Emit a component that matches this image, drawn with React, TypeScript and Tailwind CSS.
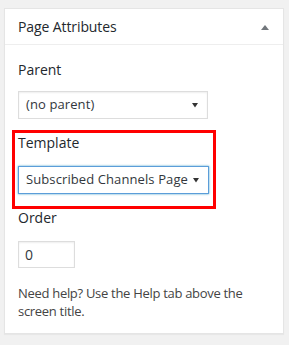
const font = { fontFamily: '"Open Sans", "Noto Sans", Arial, sans-serif' };

function SelectBox({ value, focused = false }: { value: string; focused?: boolean }) {
  return (
    <div
      className={
        'flex items-center justify-between h-[28px] pl-[7px] pr-[8px] bg-white text-[13px] tracking-[0.1px] text-[#32373c] ' +
        (focused
          ? 'w-[191px] border border-[#5b9dd9] shadow-[0_0_2px_rgba(30,140,190,0.8)]'
          : 'w-[190px] border border-[#ddd] shadow-[inset_0_1px_2px_rgba(0,0,0,0.07)]')
      }
    >
      <span className="whitespace-nowrap">{value}</span>
      <svg width="8" height="6" viewBox="0 0 8 6" className="shrink-0">
        <path d="M1 1h6L4 5.5z" fill="#333" />
      </svg>
    </div>
  );
}

export default function App() {
  return (
    <div className="w-[289px] h-[345px] bg-[#f1f1f1] pt-[8px] pl-[4px]" style={font}>
      {/* Card */}
      <div className="w-[280px] h-[326px] bg-white border border-[#e5e5e5] shadow-[0_1px_1px_rgba(0,0,0,0.04)]">
        {/* Header */}
        <div className="flex items-center justify-between h-[36px] pl-[13px] pr-[14px] border-b border-[#eee]">
          <h2 className="text-[14px] tracking-[-0.1px] text-[#23282d]">Page Attributes</h2>
          <svg width="8" height="6" viewBox="0 0 8 6">
            <path d="M0 6L4 1l4 5z" fill="#72777c" />
          </svg>
        </div>

        {/* Body */}
        <div className="pl-[13px] pt-[16px] text-[#444]">
          <p className="text-[14px] leading-[18px] text-[#23282d]">Parent</p>
          <div className="mt-[12px]">
            <SelectBox value="(no parent)" />
          </div>

          {/* Highlighted template block */}
          <div className="-ml-[6px] mt-[11px] w-[204px] border-[3px] border-[#ff0000] pl-[3px] pt-[1px] pb-[12px]">
            <p className="text-[14px] leading-[18px] text-[#23282d]">Template</p>
            <div className="mt-[14px]">
              <SelectBox value="Subscribed Channels Page" focused />
            </div>
          </div>

          <p className="text-[14px] leading-[18px] text-[#23282d]">Order</p>
          <div className="mt-[14px] w-[57px] h-[27px] border border-[#ddd] shadow-[inset_0_1px_2px_rgba(0,0,0,0.07)] flex items-center pl-[6px] text-[14px] text-[#32373c]">
            0
          </div>

          <p className="mt-[16px] text-[13px] tracking-[-0.3px] leading-[18px] text-[#444] pr-[20px]">
            Need help? Use the Help tab above the screen title.
          </p>
        </div>
      </div>
    </div>
  );
}
